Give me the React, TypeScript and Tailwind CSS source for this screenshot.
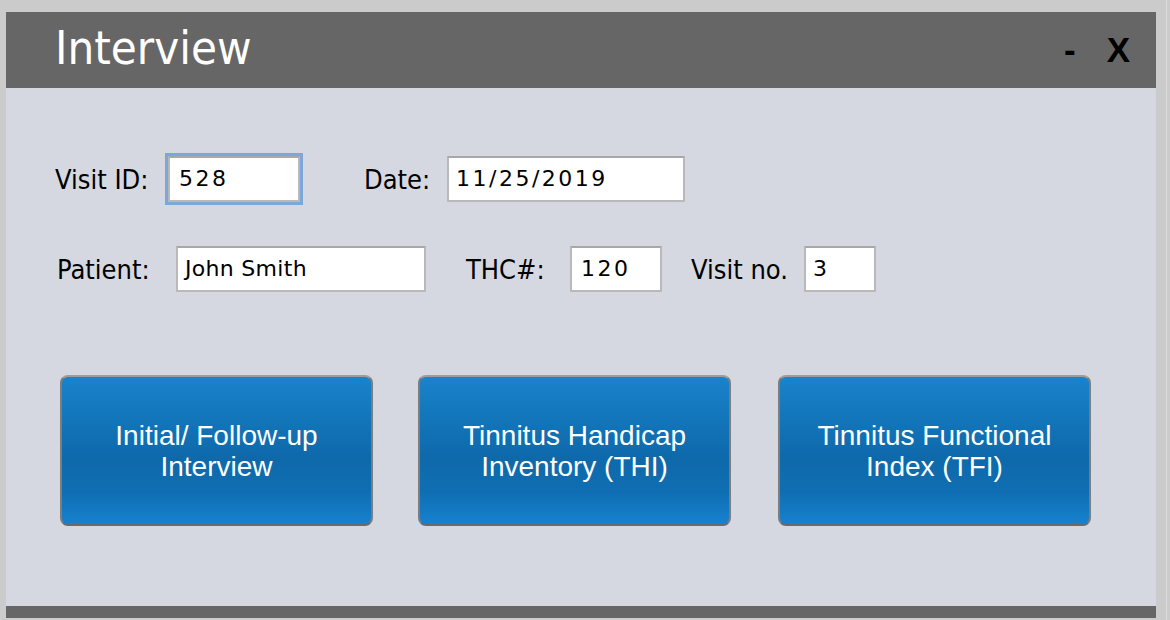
import React from "react";

const label = "font-['DejaVu_Sans_Condensed','DejaVu_Sans',sans-serif] text-[27px] text-black leading-none";
const inputBase =
  "h-[46px] bg-white border-2 border-[#b9b9b9] border-t-[#a8a8a8] flex items-center pl-[7px] font-['DejaVu_Sans',sans-serif] text-[22px] text-black leading-none";

function Btn({ l1, l2, className = "" }: { l1: string; l2: string; className?: string }) {
  return (
    <div
      className={
        "w-[313px] h-[151px] rounded-[8px] border-2 border-[#6a6a6a] border-t-[#9d9d9d] border-l-[#7d7d7d] border-r-[#7d7d7d] bg-[linear-gradient(to_bottom,#1a83cb_0%,#1478be_22%,#0e69aa_55%,#0f6eb2_78%,#1781cf_100%)] flex flex-col items-center justify-center text-white font-['Liberation_Sans',Arial,sans-serif] text-[28px] leading-[31px] " +
        className
      }
    >
      <span>{l1}</span>
      <span>{l2}</span>
    </div>
  );
}

export default function App() {
  return (
    <div className="w-[1170px] h-[620px] bg-[#cbcbcb] pt-[12px] pl-[6px] overflow-hidden relative">
      <div className="absolute right-[3px] top-0 h-full w-px bg-[#dcdcdc]" />
      <div className="w-[1150px] flex flex-col">
        <div className="h-[76px] bg-[#666666] flex items-center justify-between pl-[49px] pr-[26px]">
          <span className="font-['DejaVu_Sans_Condensed','DejaVu_Sans',sans-serif] text-[47px] text-white leading-none pb-[6px]">
            Interview
          </span>
          <div className="flex items-center font-['Liberation_Sans',Arial,sans-serif] font-bold text-[35px] text-black leading-none pb-[2px]">
            <span>-</span>
            <span className="ml-[31px]">X</span>
          </div>
        </div>
        <div className="h-[518px] bg-[#d5d8e0] pl-[49px] pt-[68px]">
          <div className="flex items-center">
            <span className={label + " w-[113px]"}>Visit ID:</span>
            <div className={inputBase + " w-[132px] pl-[9px] tracking-[2.5px] outline-[3px] outline-solid outline-[#7ea7d9]"}>528</div>
            <span className={label + " ml-[64px] w-[83px]"}>Date:</span>
            <div className={inputBase + " w-[238px] tracking-[2.5px]"}>11/25/2019</div>
          </div>
          <div className="flex items-center mt-[44px]">
            <span className={label + " ml-[2px] w-[119px]"}>Patient:</span>
            <div className={inputBase + " w-[250px] tracking-[0.3px]"}>John Smith</div>
            <span className={label + " ml-[40px] w-[104px]"}>THC#:</span>
            <div className={inputBase + " w-[92px] pl-[9px] tracking-[2.5px]"}>120</div>
            <span className={label + " ml-[29px] w-[113px]"}>Visit no.</span>
            <div className={inputBase + " w-[72px]"}>3</div>
          </div>
          <div className="flex mt-[83px] ml-[5px]">
            <Btn l1="Initial/ Follow-up" l2="Interview" />
            <Btn l1="Tinnitus Handicap" l2="Inventory (THI)" className="ml-[45px]" />
            <Btn l1="Tinnitus Functional" l2="Index (TFI)" className="ml-[47px]" />
          </div>
        </div>
        <div className="h-[12px] bg-[#666666]" />
      </div>
    </div>
  );
}
